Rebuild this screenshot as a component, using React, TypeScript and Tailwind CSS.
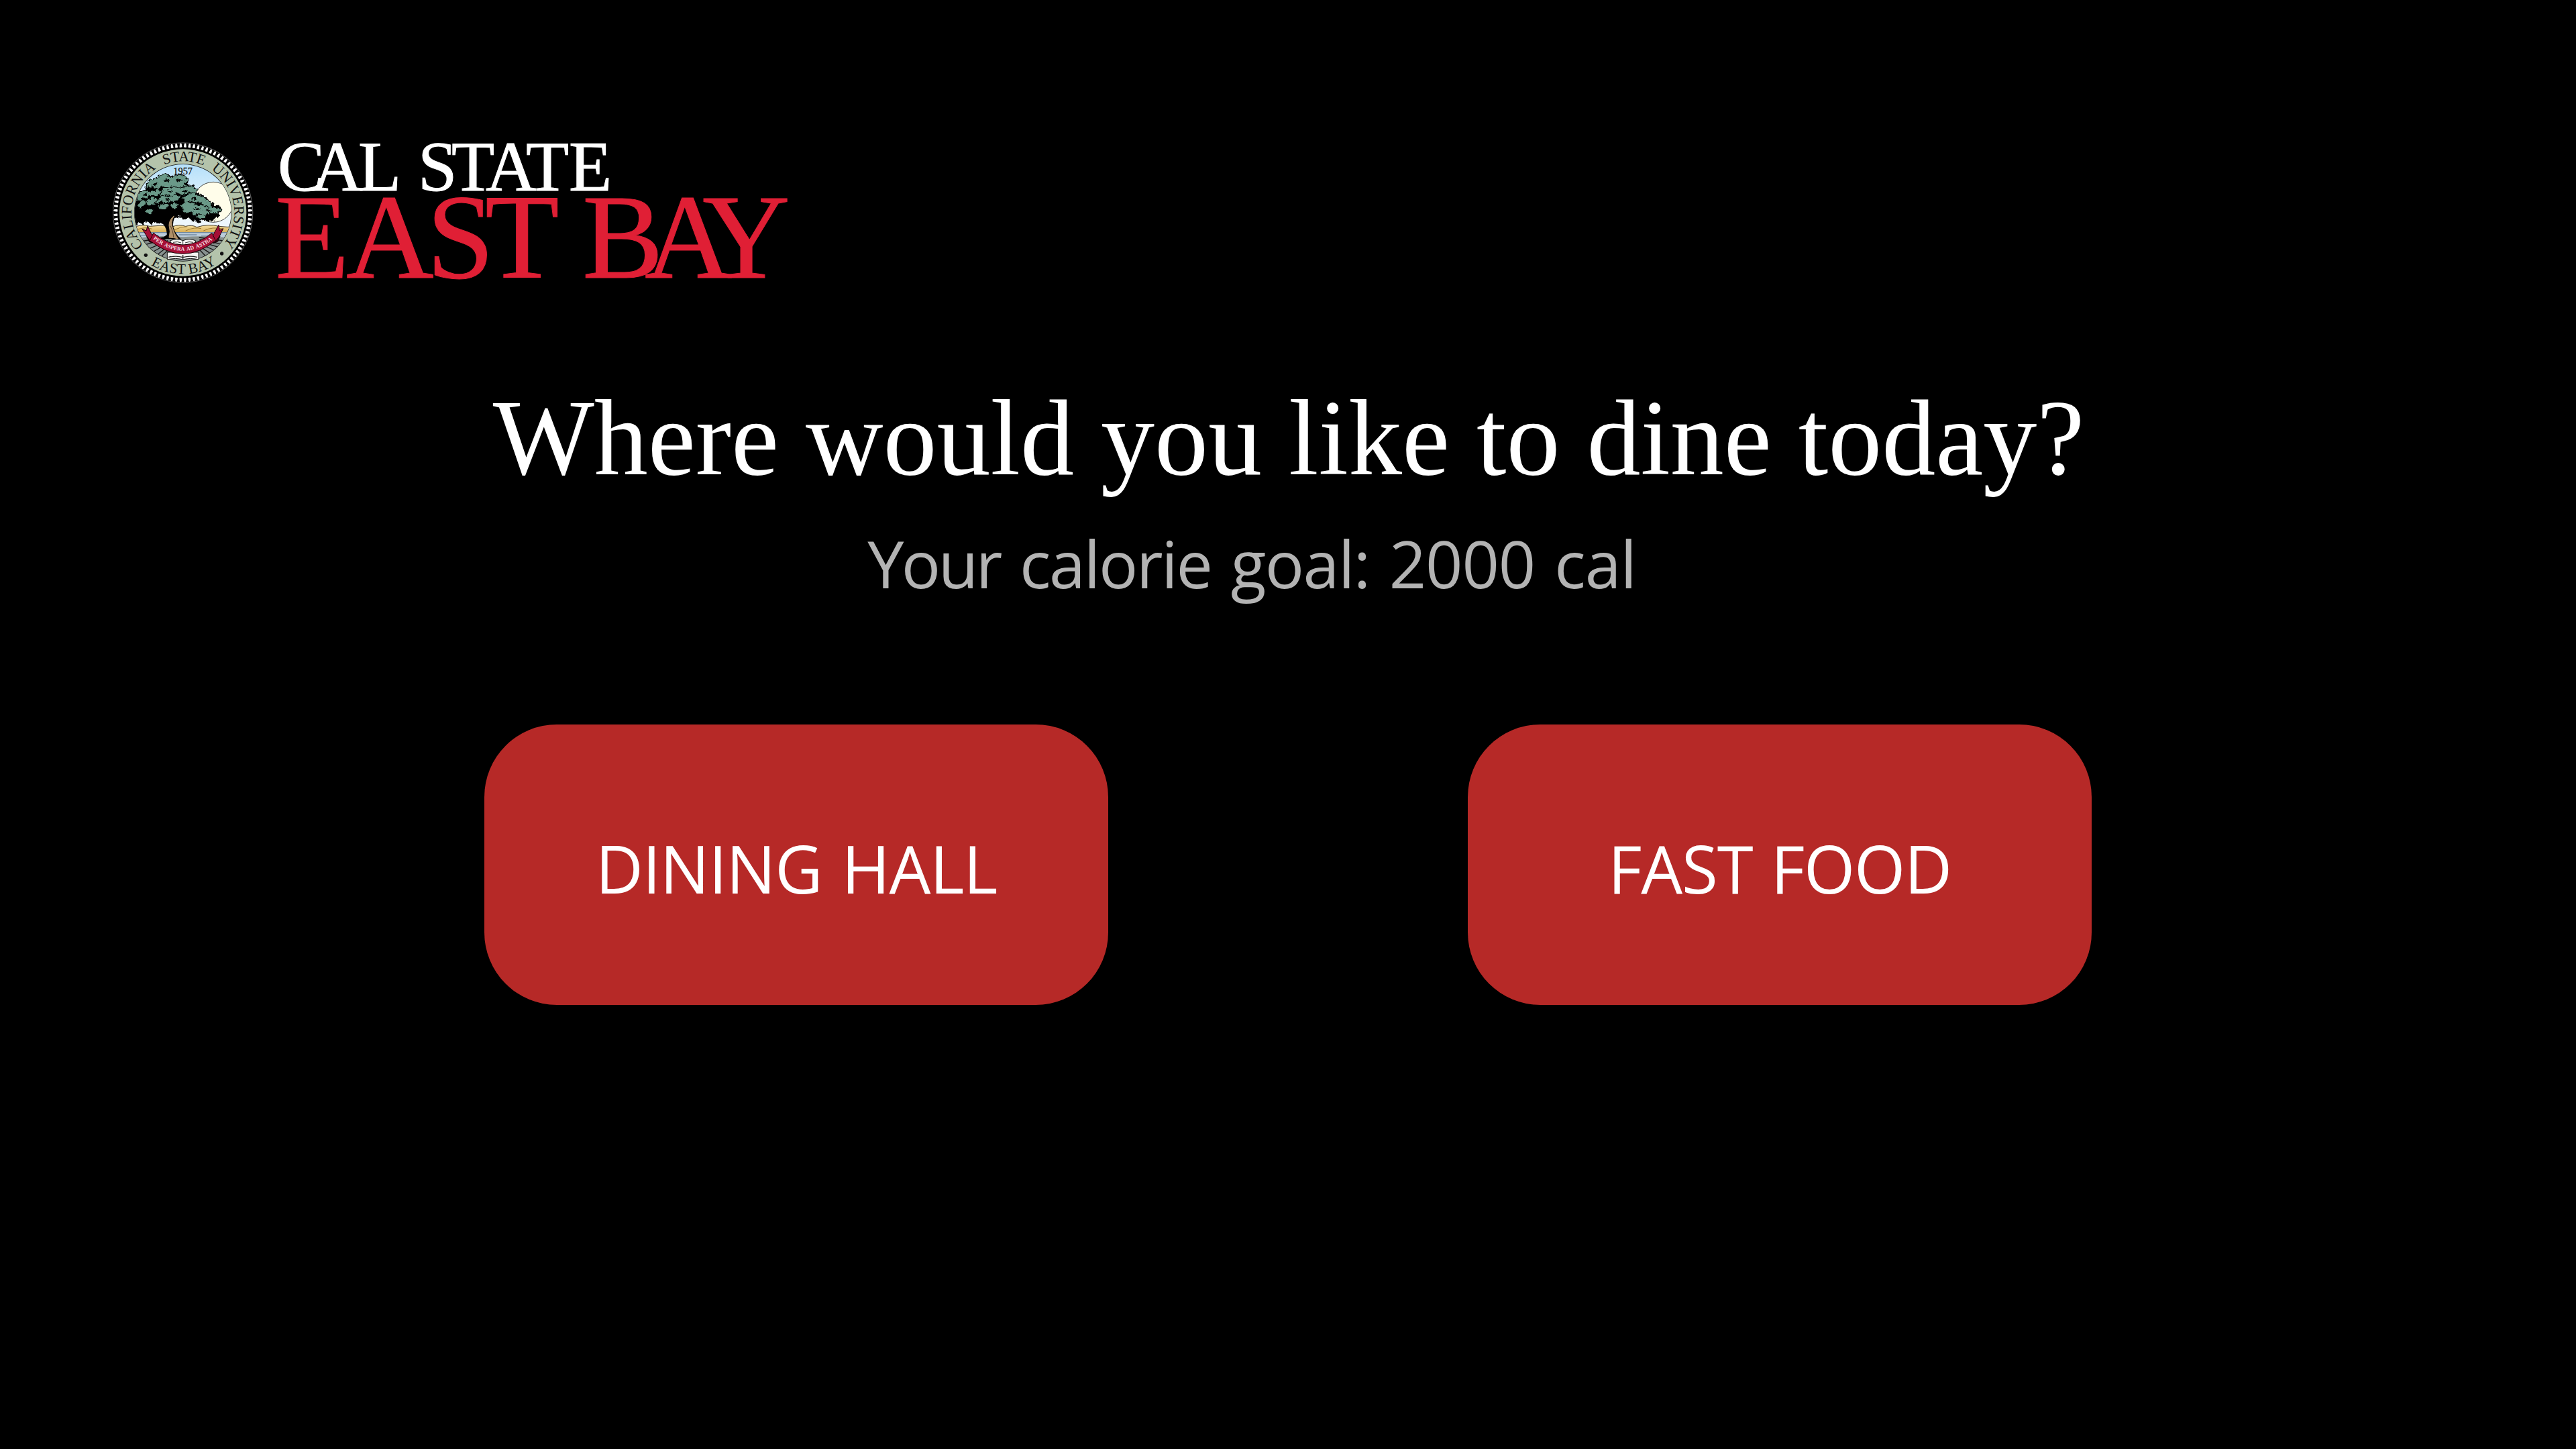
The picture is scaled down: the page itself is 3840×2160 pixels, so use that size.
const SERIF = "'Liberation Serif', 'Times New Roman', serif";

// Point on the seal's circles: angle in degrees clockwise from the top.
const pt = (r: number, deg: number) => {
  const a = (deg * Math.PI) / 180;
  return `${(338 + r * Math.sin(a)).toFixed(1)} ${(351 - r * Math.cos(a)).toFixed(1)}`;
};
const arc = (r: number, from: number, to: number, sweep: 0 | 1) =>
  `M${pt(r, from)} A${r} ${r} 0 0 ${sweep} ${pt(r, to)}`;

const BEADS = Array.from({ length: 96 }, (_, i) => (i * 360) / 96);

const FOLIAGE =
  "M110 300 L134 282 L142 262 L170 250 L176 222 L188 206 L214 202 L232 184 L262 180 L282 192 L308 184 L336 182 L362 196 L366 214 L356 226 L384 234 L402 248 L400 264 L420 276 L440 284 L452 302 L474 312 L478 322 L502 322 L512 340 L500 350 L502 368 L480 372 L478 386 L456 382 L446 392 L436 380 L420 386 L412 398 L396 386 L380 388 L366 376 L348 382 L330 368 L312 372 L294 364 L282 376 L276 404 L262 404 L256 380 L242 396 L226 400 L212 390 L196 402 L182 388 L166 392 L156 404 L144 390 L130 402 L110 390 Z";

const LEAVES = [
  "M178 238 L190 208 L216 206 L234 188 L262 184 L280 198 L312 188 L350 190 L362 208 L336 220 L354 232 L322 236 L300 228 L270 240 L244 230 L224 244 L200 236 Z",
  "M134 292 L146 266 L174 254 L206 262 L226 250 L238 260 L220 274 L194 272 L178 286 L160 280 L146 296 Z",
  "M246 250 L276 246 L300 236 L334 244 L372 236 L400 250 L392 264 L362 260 L340 272 L312 262 L288 274 L262 268 L240 276 Z",
  "M232 288 L258 278 L284 284 L308 274 L324 284 L306 300 L284 296 L262 306 L246 300 L224 308 Z",
  "M340 284 L366 270 L398 272 L434 286 L448 304 L470 316 L462 328 L434 318 L420 302 L396 308 L376 296 L352 304 Z",
  "M330 318 L350 308 L380 312 L402 322 L420 318 L446 332 L478 328 L506 338 L494 350 L462 348 L440 362 L416 352 L394 358 L372 344 L352 348 Z",
  "M176 304 L200 288 L222 292 L212 308 L190 318 Z",
  "M138 316 L158 300 L172 304 L164 322 L146 330 Z",
  "M228 326 L250 314 L272 318 L262 332 L240 336 Z",
  "M284 318 L306 308 L318 320 L302 334 Z",
  "M176 346 L192 336 L206 342 L190 356 Z",
  "M398 370 L420 360 L440 368 L420 376 Z",
];

const GAPS = [
  "M196 226 l18 -7 l16 5 l-14 7 z",
  "M250 210 l16 -6 l18 6 l-16 6 z",
  "M302 208 l20 -7 l14 5 l-20 8 z",
  "M268 258 l18 -6 l10 5 l-16 6 z",
  "M330 256 l20 -7 l14 6 l-18 5 z",
  "M372 290 l20 -5 l12 7 l-18 4 z",
  "M384 336 l20 -6 l16 8 l-20 5 z",
  "M436 342 l18 -5 l14 5 l-18 5 z",
  "M158 272 l14 -6 l12 4 l-14 6 z",
  "M262 292 l14 -4 l8 4 l-14 5 z",
];

function Seal() {
  return (
    <svg viewBox="0 0 690 690" className="block h-[230px] w-[230px] shrink-0">
      <defs>
        <clipPath id="scene">
          <circle cx="338" cy="351" r="216" />
        </clipPath>
        <linearGradient id="sky" x1="0" y1="0" x2="0" y2="1">
          <stop offset="0" stopColor="#b3dffa" />
          <stop offset="0.7" stopColor="#eef7fc" />
        </linearGradient>
        <linearGradient id="hill" x1="0" y1="0" x2="0" y2="1">
          <stop offset="0" stopColor="#f3dc9c" />
          <stop offset="1" stopColor="#cf9f3f" />
        </linearGradient>
        {/* breaks the straight leaf edges into ragged ones */}
        <filter id="ragged" x="-10%" y="-10%" width="120%" height="120%" colorInterpolationFilters="sRGB">
          <feTurbulence type="turbulence" baseFrequency="0.05" numOctaves="2" seed="4" result="n" />
          <feDisplacementMap in="SourceGraphic" in2="n" scale="20" xChannelSelector="R" yChannelSelector="G" />
          <feOffset dx="-5" dy="-5" />
        </filter>
        <path id="arc-left" d={arc(230, -130, -29, 1)} />
        <path id="arc-top" d={arc(230, -21.5, 40, 1)} />
        <path id="arc-right" d={arc(230, 33.2, 135, 1)} />
        <path id="arc-bottom" d={arc(274, 211.5, 140, 0)} />
        <path id="arc-motto" d="M204 469 Q338 575 478 467" />
      </defs>

      {/* beaded rim */}
      <circle cx="338" cy="351" r="312.5" fill="#000" stroke="#8c8c8c" strokeWidth="2" />
      {BEADS.map((a) => (
        <path
          key={a}
          d="M332 58 L334 43 Q338 38 342 43 L344 58 Q338 60 332 58 Z"
          fill="#fff"
          transform={`rotate(${a + 1.9} 338 351)`}
        />
      ))}
      <circle cx="338" cy="351" r="284" fill="#b4c3ab" />
      <circle cx="338" cy="351" r="218" fill="#111" />

      <g clipPath="url(#scene)">
        <rect x="110" y="130" width="460" height="300" fill="url(#sky)" />
        <circle cx="474" cy="304" r="90" fill="#fffdea" stroke="#222" strokeWidth="2.5" />
        <path
          d="M110 420 Q150 400 190 412 Q240 404 290 414 Q320 402 350 412 Q380 404 400 416 Q450 400 500 412 Q540 418 570 412 V450 H110 Z"
          fill="url(#hill)"
          stroke="#2a2213"
          strokeWidth="2.5"
        />
        <path
          d="M300 428 Q330 412 356 414 M350 432 Q390 414 420 422 M430 432 Q470 412 520 424 M130 428 Q170 412 200 424"
          fill="none"
          stroke="#9b752c"
          strokeWidth="3"
        />
        <rect x="110" y="438" width="460" height="34" fill="#bccddb" />
        <path d="M110 440 H570 M140 452 H230 M320 450 H400 M420 456 H480" stroke="#7089a0" strokeWidth="4" />
        <path d="M110 470 Q230 448 338 460 Q450 452 570 466 V580 H110 Z" fill="#87918f" />
        <path
          d="M150 480 L250 462 M150 500 L262 468 M170 520 L270 476 M190 534 L276 486 M212 548 L280 494 M232 556 L284 506 M530 478 L410 462 M530 496 L412 470 M520 512 L412 480 M500 528 L412 490 M474 542 L410 500 M448 554 L408 512"
          stroke="#161616"
          strokeWidth="4"
        />
        <g filter="url(#ragged)">
          <path d={FOLIAGE} fill="#000" stroke="#000" strokeWidth="4" strokeLinejoin="round" />
          {LEAVES.map((d) => (
            <path key={d} d={d} fill="#6a9988" strokeLinejoin="round" stroke="#6a9988" strokeWidth="4" />
          ))}
          {GAPS.map((d) => (
            <path key={d} d={d} fill="#050505" />
          ))}
        </g>
        {/* trunk */}
        <path
          d="M214 388 Q246 396 256 410 Q268 430 266 450 L240 468 L330 470 Q310 452 300 430 Q288 404 300 376 L330 366 L240 360 Z"
          fill="#000"
        />
        <path
          d="M298 366 Q276 382 276 408 Q284 436 276 462 L300 464 L316 468 Q300 446 294 426 Q280 392 298 366 Z"
          fill="#b09068"
          stroke="#b09068"
          strokeWidth="3"
        />
        <path d="M282 410 Q296 440 296 462" fill="none" stroke="#4c3a24" strokeWidth="2.5" />
      </g>

      {/* open book */}
      <path d="M282 476 Q312 464 338 476 Q366 464 394 476 V512 H282 Z" fill="#f4f4f2" stroke="#111" strokeWidth="3" />
      <path
        d="M338 476 V512 M294 484 Q314 478 330 486 M294 494 Q314 488 330 496 M348 486 Q366 478 384 484 M348 496 Q366 488 384 494"
        fill="none"
        stroke="#333"
        strokeWidth="3"
      />
      <path d="M268 528 H408 V560 Q370 552 338 560 Q306 552 268 560 Z" fill="#f4f4f2" stroke="#111" strokeWidth="3" />
      <path d="M274 550 Q310 542 338 551 Q366 542 402 550 M338 540 V560" fill="none" stroke="#222" strokeWidth="4" />

      {/* ribbon */}
      <g fill="#a50f36" stroke="#1c0208" strokeWidth="3" strokeLinejoin="round">
        <path d="M156 424 L174 432 L180 410 L196 444 L216 476 L190 478 L176 456 Z" />
        <path d="M518 422 L502 430 L498 406 L480 438 L462 474 L486 478 L502 456 Z" />
        <path d="M192 478 L176 458 L188 482 L202 486 Z M484 478 L504 456 L494 480 L474 488 Z" fill="#3b0613" />
        <path d="M206 442 Q338 548 468 442 L484 476 Q338 594 190 476 Z" />
      </g>
      <text fill="#f6dfe4" fontFamily={SERIF} fontWeight="700" fontSize="25" wordSpacing="5">
        <textPath href="#arc-motto" textLength="290" lengthAdjust="spacingAndGlyphs">
          PER ASPERA AD ASTRA
        </textPath>
      </text>

      <text x="338" y="180" textAnchor="middle" fill="#111" stroke="#111" strokeWidth="0.8" fontFamily={SERIF} fontSize="43">
        1957
      </text>
      <g fill="#111" fontFamily={SERIF} fontSize="65">
        <text>
          <textPath href="#arc-left" textLength="396">CALIFORNIA</textPath>
        </text>
        <text>
          <textPath href="#arc-top" textLength="182">STATE</textPath>
        </text>
        <text>
          <textPath href="#arc-right" textLength="382">UNIVERSITY</textPath>
        </text>
        <text>
          <textPath href="#arc-bottom" textLength="310">EAST BAY</textPath>
        </text>
      </g>
      <circle cx="172" cy="541" r="8" fill="#111" />
      <circle cx="512" cy="534" r="8" fill="#111" />
    </svg>
  );
}

function Wordmark() {
  return (
    <svg viewBox="390 200 800 230" className="block h-[230px] w-[800px] shrink-0 overflow-visible">
      <text
        fontFamily={SERIF}
        fontSize="105"
        fill="#fff"
        stroke="#fff"
        strokeWidth="1"
        y="283.5"
        x="414 465 534 590 623 673 724 784 848"
      >
        CAL STATE
      </text>
      <text
        fontFamily={SERIF}
        fontSize="181"
        fill="#e01f35"
        stroke="#e01f35"
        strokeWidth="1"
        y="413.5"
        x="410 516 636 723 830 868 961 1047"
      >
        EAST BAY
      </text>
    </svg>
  );
}

function Choice({ label, className }: { label: string; className: string }) {
  return (
    <button
      className={`flex h-[418px] w-[930px] items-center justify-center rounded-[108px] bg-[#b62927] pt-2.5 text-[98px] leading-[134px] text-white ${className}`}
    >
      {label}
    </button>
  );
}

export default function App() {
  return (
    <div className="flex h-[2160px] w-[3840px] flex-col items-center overflow-hidden bg-black pt-[200px] font-['Open_Sans','Noto_Sans',sans-serif]">
      <header className="flex self-start pl-[160px]">
        <Seal />
        <Wordmark />
      </header>
      <h1 className="mt-[131px] ml-0.5 font-['Liberation_Serif','Times_New_Roman',serif] text-[160px] leading-[184px] text-white">
        Where would you like to dine today?
      </h1>
      <p className="mt-7 mr-[108px] text-[97px] leading-[132px] tracking-[-1.1px] whitespace-nowrap text-[#b3b3b3] [word-spacing:5px]">
        <span className="tracking-[-3.5px]">Your</span> <span className="tracking-[-2.3px]">calorie</span>{" "}
        <span className="tracking-[-1.6px]">goal:</span> 2000 cal
      </p>
      <main className="mt-[175px] flex gap-[536px]">
        <Choice label="DINING HALL" className="tracking-[-1.2px] [word-spacing:5px]" />
        <Choice label="FAST FOOD" className="tracking-[-1.2px] [word-spacing:3px]" />
      </main>
    </div>
  );
}
